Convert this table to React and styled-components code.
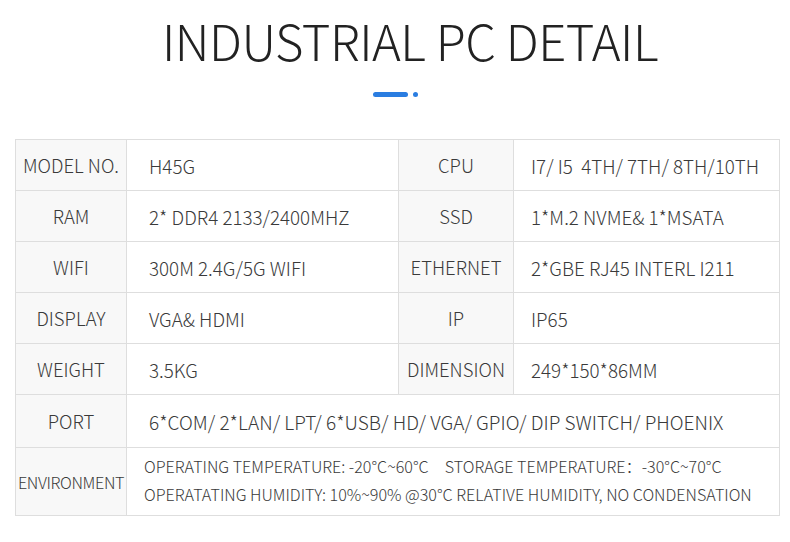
import React from 'react';
import styled, { createGlobalStyle } from 'styled-components';

const GlobalStyle = createGlobalStyle`
    html, body {
        margin: 0;
        padding: 0;
        background: #ffffff;
    }
    body {
        font-family: "Noto Sans CJK SC", "Noto Sans", sans-serif;
        color: #333;
    }
`;

const StyledPage = styled.div`
    width: 790px;
    height: 542px;
    background: #fff;
    padding-top: 10px;
    box-sizing: border-box;

    .heading {
        text-align: center;
        font-size: 49px;
        font-weight: 300;
        line-height: 60px;
        color: #222;
        letter-spacing: -0.5px;
        padding-left: 30px;
        margin: 0;
    }

    .divider {
        display: flex;
        justify-content: center;
        align-items: center;
        gap: 5px;
        margin-top: 21px;
        height: 6px;
    }
`;

const Bar = styled.span`
    width: 35px;
    height: 5px;
    border-radius: 3px;
    background: #2a7de1;
`;

const Dot = styled.span`
    width: 5px;
    height: 5px;
    border-radius: 50%;
    background: #2a7de1;
`;

const SpecTable = styled.table`
    margin: 42px 0 0 15px;
    width: 764px;
    border-collapse: collapse;
    table-layout: fixed;
    font-weight: 300;
    color: #3a3a3a;

    td {
        border: 1px solid #dedede;
        padding: 0;
        white-space: pre;
    }
`;

const Label = styled.td`
    background: #f8f8f8;
    text-align: center;
    font-size: ${p => (p.$small ? '16.3px' : '18.5px')};
    letter-spacing: ${p => (p.$small ? '-0.4px' : '0')};
`;

const Value = styled.td`
    font-size: ${p => (p.$big ? '19px' : '18.8px')};
    padding-left: ${p => (p.$right ? '17px' : '22px')} !important;
`;

const Row = styled.tr`
    height: ${p => p.$h || 51}px;
`;

const EnvText = styled.div`
    font-size: 16.1px;
    line-height: 28px;
    padding-left: 17px;
    padding-bottom: 4px;
    white-space: nowrap;

    .gap {
        display: inline-block;
        width: 16px;
    }
`;

const specs = [
    ['MODEL NO.', 'H45G', 'CPU', 'I7/ I5  4TH/ 7TH/ 8TH/10TH'],
    ['RAM', '2* DDR4 2133/2400MHZ', 'SSD', '1*M.2 NVME& 1*MSATA'],
    ['WIFI', '300M 2.4G/5G WIFI', 'ETHERNET', '2*GBE RJ45 INTERL I211'],
    ['DISPLAY', 'VGA& HDMI', 'IP', 'IP65'],
    ['WEIGHT', '3.5KG', 'DIMENSION', '249*150*86MM'],
];

const App = () => {
    return (
        <>
            <GlobalStyle />
            <StyledPage>
                <h1 className='heading'>INDUSTRIAL PC DETAIL</h1>
                <div className='divider'>
                    <Bar />
                    <Dot />
                </div>

                <SpecTable>
                    <colgroup>
                        <col style={{ width: 111 }} />
                        <col style={{ width: 272 }} />
                        <col style={{ width: 115 }} />
                        <col style={{ width: 266 }} />
                    </colgroup>
                    <tbody>
                        {specs.map(([l1, v1, l2, v2]) => (
                            <Row key={l1}>
                                <Label>{l1}</Label>
                                <Value>{v1}</Value>
                                <Label>{l2}</Label>
                                <Value $right>{v2}</Value>
                            </Row>
                        ))}
                        <Row $h={53}>
                            <Label>PORT</Label>
                            <Value $big colSpan={3}>
                                6*COM/ 2*LAN/ LPT/ 6*USB/ HD/ VGA/ GPIO/ DIP SWITCH/ PHOENIX
                            </Value>
                        </Row>
                        <Row $h={68}>
                            <Label $small>ENVIRONMENT</Label>
                            <td colSpan={3}>
                                <EnvText>
                                    OPERATING TEMPERATURE: -20°C~60°C<span className='gap' />STORAGE TEMPERATURE：-30°C~70°C
                                    <br />
                                    OPERATATING HUMIDITY: 10%~90% @30°C RELATIVE HUMIDITY, NO CONDENSATION
                                </EnvText>
                            </td>
                        </Row>
                    </tbody>
                </SpecTable>
            </StyledPage>
        </>
    );
};

export default App;
